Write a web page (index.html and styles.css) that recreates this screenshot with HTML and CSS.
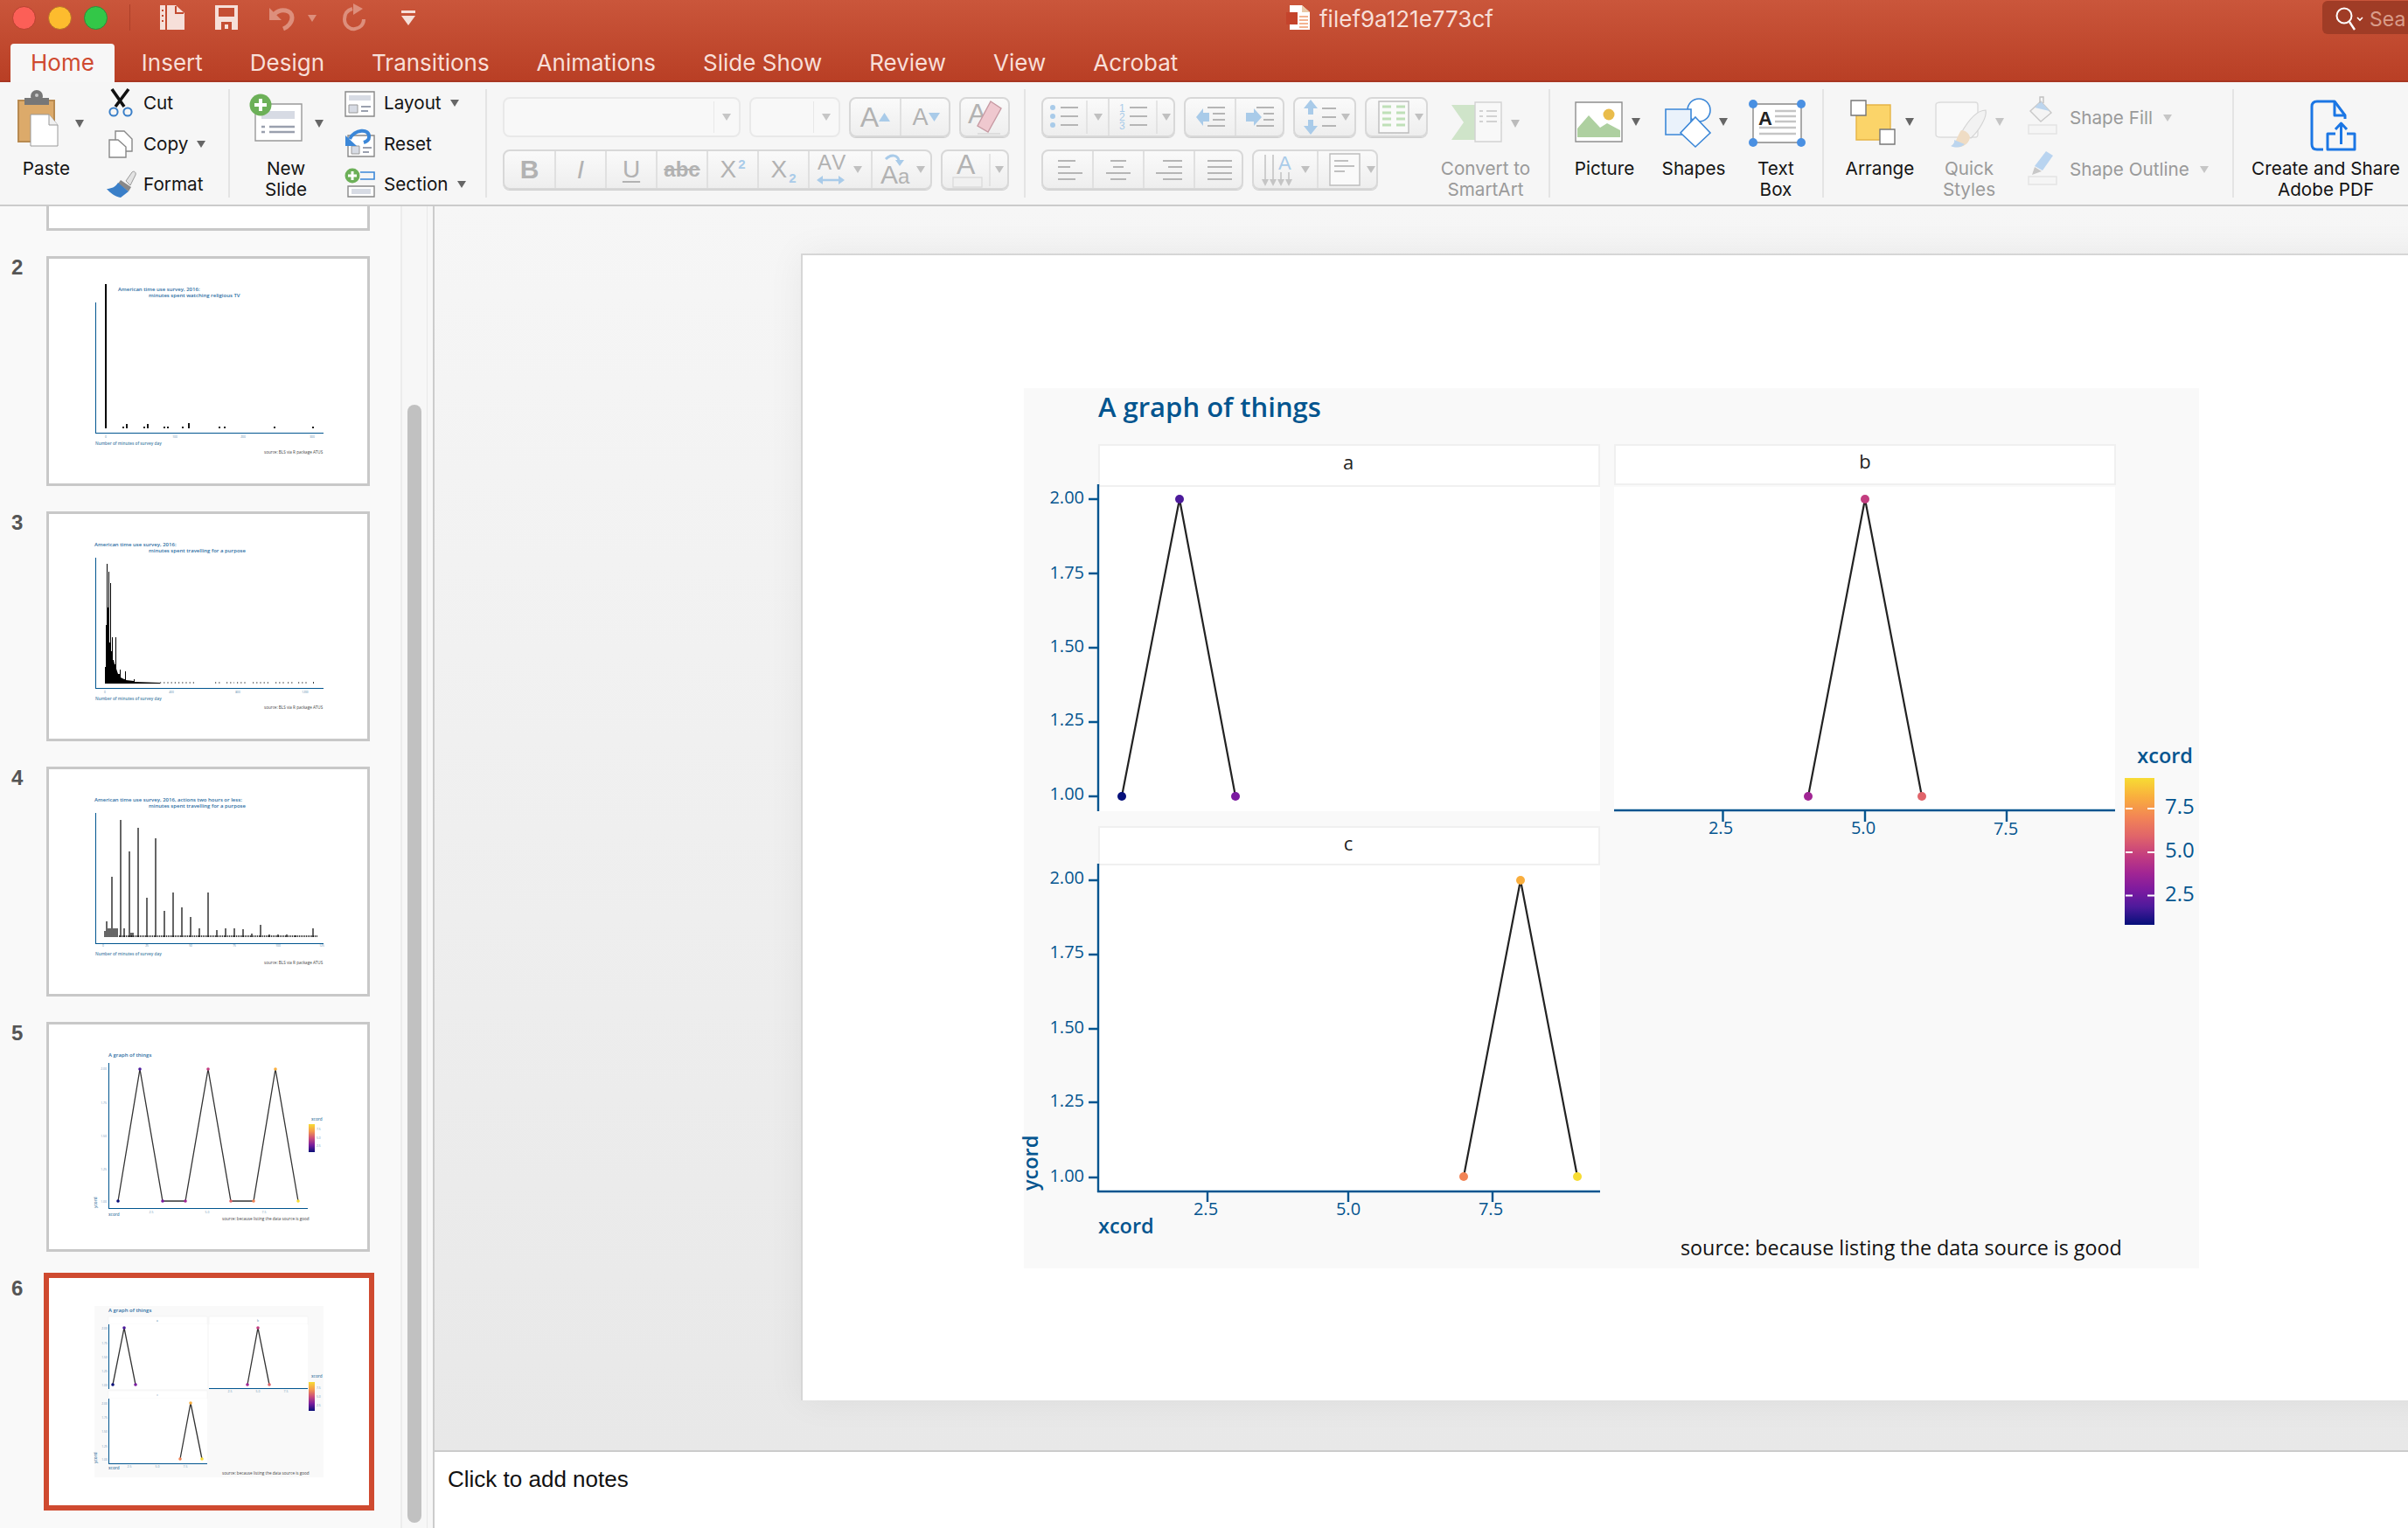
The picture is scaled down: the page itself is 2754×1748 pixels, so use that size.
FILE: index.html
```html
<!DOCTYPE html>
<html lang="en">
<head>
<meta charset="utf-8">
<title>filef9a121e773cf</title>
<link rel="stylesheet" href="styles.css">
</head>
<body>
<div class="app">
  <div class="chrome">
    <header class="titlebar">
      <span class="light red"></span><span class="light yellow"></span><span class="light green"></span>
      <span class="qat-sep"></span>
      <svg class="qat q-doc" width="32" height="28" viewBox="0 0 32 28"><path d="M2 0H20L30 9V28H2Z" fill="#f6dfd9"/><path d="M9 0V28" stroke="#c24a30" stroke-width="2"/><path d="M5 5V7M5 11V13M5 17V19" stroke="#c24a30" stroke-width="2"/><path d="M20 1V9H29" fill="none" stroke="#c24a30" stroke-width="2"/></svg>
      <svg class="qat q-save" width="30" height="28" viewBox="0 0 30 28"><path d="M2 0H28V28H2Z" fill="#f6dfd9"/><path d="M6 3H24V13H6Z" fill="#c54e34"/><path d="M9 19H21V28H9Z" fill="#c54e34"/><path d="M13 22H17V27H13Z" fill="#f6dfd9"/></svg>
      <svg class="qat q-undo" width="60" height="28" viewBox="0 0 60 28"><path d="M3 3V17H17Z" fill="#dd8f7c"/><path d="M9 10C16 3 29 5 29 14C29 20 24 25 19 27" fill="none" stroke="#dd8f7c" stroke-width="5"/><path d="M47 11H57L52 19Z" fill="#dd8f7c"/></svg>
      <svg class="qat q-redo" width="28" height="32" viewBox="0 0 28 32"><path d="M13 0L24 6L13 13Z" fill="#dd8f7c"/><path d="M12 6C5 8 3 13 3 18C3 26 10 30 15 29C21 28 25 24 25 18" fill="none" stroke="#dd8f7c" stroke-width="4"/></svg>
      <svg class="qat q-more" width="18" height="20" viewBox="0 0 18 20"><path d="M1 2H17V5H1Z" fill="#f6dfd9"/><path d="M1 8H17L9 19Z" fill="#f6dfd9"/></svg>
      <svg class="doc-icon" width="28" height="28" viewBox="0 0 28 28"><path d="M4 0H18L27 8V28H4Z" fill="#fff"/><path d="M18 0V8H27Z" fill="#e9c9a8"/><path d="M0 8H13V22H0Z" fill="#c4432b"/><path d="M15 13H25M15 17H25M15 21H25M15 25H25" stroke="#ef9a6d" stroke-width="1.6"/></svg>
      <span class="doc-title">filef9a121e773cf</span>
      <div class="search">
        <svg width="34" height="30" viewBox="0 0 34 30"><circle cx="11" cy="11" r="8.5" fill="none" stroke="#fff" stroke-width="2"/><path d="M17 18L23 27" stroke="#fff" stroke-width="2.4"/><path d="M26 13L29 16L32 13" fill="none" stroke="#fff" stroke-width="1.6"/></svg>
        <span class="search-text">Sea</span>
      </div>
    </header>
    <nav class="tabs">
      <span class="tab active">Home</span>
      <span class="tab">Insert</span>
      <span class="tab">Design</span>
      <span class="tab">Transitions</span>
      <span class="tab">Animations</span>
      <span class="tab">Slide Show</span>
      <span class="tab">Review</span>
      <span class="tab">View</span>
      <span class="tab">Acrobat</span>
    </nav>
  </div>

  <section class="ribbon">
    <div class="group g-clip">
      <div class="big b-paste">
        <svg width="106" height="79" viewBox="0 0 106 79"><path d="M21 13H62V60H21Z" fill="#dcaa6a" stroke="#b88a50" stroke-width="2"/><path d="M28 10H56V18H28Z" fill="#777"/><circle cx="42" cy="8" r="7" fill="#777"/><circle cx="42" cy="7" r="2" fill="#c8c8c8"/><path d="M35 29H56L66 41V65H35Z" fill="#fff" stroke="#999" stroke-width="1"/><path d="M56 29V41H66" fill="#f0f0f0" stroke="#999"/><path d="M86 35H96L91 44Z" fill="#666"/></svg>
        <span class="lbl">Paste</span>
      </div>
      <div class="stack s-clip">
        <div class="row">
          <svg class="ico" width="40" height="32" viewBox="0 0 40 32"><path d="M10 0L24 20M29 0L14 20" stroke="#111" stroke-width="3.6"/><circle cx="12" cy="26" r="4.6" fill="none" stroke="#3a7fc8" stroke-width="2"/><circle cx="28" cy="26" r="4.6" fill="none" stroke="#3a7fc8" stroke-width="2"/></svg>
          <span class="lbl">Cut</span>
        </div>
        <div class="row">
          <svg class="ico" width="40" height="32" viewBox="0 0 40 32"><path d="M14 1H24L33 10V24H14Z" fill="#fff" stroke="#888" stroke-width="1.4"/><path d="M7 11H17L26 19V31H7Z" fill="#fff" stroke="#888" stroke-width="1.4"/></svg>
          <span class="lbl">Copy</span><span class="caret"></span>
        </div>
        <div class="row">
          <svg class="ico" width="40" height="32" viewBox="0 0 40 32"><path d="M26 12L33 2C35 0 38 2 37 5L31 17Z" fill="#e3e3e3" stroke="#999"/><path d="M20 11L32 19L29 24L17 15Z" fill="#888"/><path d="M17 14L29 24L20 31C14 30 8 26 4 21C9 21 14 19 17 14Z" fill="#3a7fc8"/></svg>
          <span class="lbl">Format</span>
        </div>
      </div>
    </div>

    <div class="group g-slides">
      <div class="big b-new">
        <svg width="94" height="79" viewBox="0 0 94 79"><path d="M12 17H65V59H12Z" fill="#fff" stroke="#999" stroke-width="1.4"/><path d="M19 25H57V34H19Z" fill="#d7dbe4"/><path d="M19 43H23M28 43H57M19 49H23M28 49H57" stroke="#9aa0ae" stroke-width="2.4"/><circle cx="18" cy="18" r="12.5" fill="#6cb058"/><path d="M18 11V25M11 18H25" stroke="#fff" stroke-width="4"/><path d="M80 35H90L85 44Z" fill="#666"/></svg>
        <span class="lbl">New<br>Slide</span>
      </div>
      <div class="stack s-slides">
        <div class="row">
          <svg class="ico2" width="44" height="32" viewBox="0 0 44 32"><path d="M6 3H39V31H6Z" fill="#fff" stroke="#888" stroke-width="1.4"/><path d="M10 7H35V13H10Z" fill="#d7dbe4"/><path d="M10 18H20V27H10Z" fill="#d7dbe4" stroke="#999" stroke-width="1"/><path d="M24 20H35M24 25H32" stroke="#9aa0ae" stroke-width="2"/></svg>
          <span class="lbl">Layout</span><span class="caret"></span>
        </div>
        <div class="row">
          <svg class="ico2" width="44" height="32" viewBox="0 0 44 32"><path d="M9 6H39V30H9Z" fill="#fff" stroke="#888" stroke-width="1.4"/><path d="M13 18H22V27H13Z" fill="#d7dbe4" stroke="#999" stroke-width="1"/><path d="M26 20H36M26 25H33" stroke="#9aa0ae" stroke-width="2"/><path d="M6 6V18H19Z" fill="#3b87d8"/><path d="M11 10C16 -1 34 -3 33 8C33 11 30 13 27 14" fill="none" stroke="#3b87d8" stroke-width="4"/></svg>
          <span class="lbl">Reset</span>
        </div>
        <div class="row">
          <svg class="ico2" width="44" height="32" viewBox="0 0 44 32"><path d="M23 2H39V10H23" fill="none" stroke="#3b87d8" stroke-width="1.6"/><path d="M9 18H39V30H9Z" fill="#fff" stroke="#888" stroke-width="1.4"/><path d="M13 21H35V27H13Z" fill="#d7dbe4"/><circle cx="14" cy="6" r="8.5" fill="#6cb058"/><path d="M14 1V11M9 6H19" stroke="#fff" stroke-width="3"/></svg>
          <span class="lbl">Section</span><span class="caret"></span>
        </div>
      </div>
    </div>

    <div class="group g-font">
      <div class="tool-row">
        <div class="field f-name"><span class="field-sep"></span><span class="caret off"></span></div>
        <div class="field f-size"><span class="field-sep"></span><span class="caret off"></span></div>
        <div class="set w116">
          <div class="cell w58"><span class="glyph g30">A</span><svg width="13" height="10" viewBox="0 0 13 10"><path d="M0 10L6.500 0L13 10Z" fill="#a9cbe9"/></svg></div>
          <div class="cell w58"><span class="glyph g26">A</span><svg width="13" height="10" viewBox="0 0 13 10"><path d="M0 0L6.500 10L13 0Z" fill="#a9cbe9"/></svg></div>
        </div>
        <div class="set w58">
          <div class="cell w58 clear-cell"><span class="glyph g30 clear-a">A</span><svg class="eraser" width="34" height="42" viewBox="0 0 34 42"><path d="M19 3L31 11L16 38L4 31Z" fill="#efc8cf" stroke="#c79aa3" stroke-width="1.400"/><path d="M4 40H30" stroke="#ddd" stroke-width="2"/></svg></div>
        </div>
      </div>
      <div class="tool-row">
        <div class="set w491">
          <div class="cell w57"><span class="glyph bold">B</span></div>
          <div class="cell w58"><span class="glyph ital">I</span></div>
          <div class="cell w58"><span class="glyph under">U</span></div>
          <div class="cell w58"><span class="glyph strike">abc</span></div>
          <div class="cell w58"><span class="glyph g28">X</span><span class="sup-blue">2</span></div>
          <div class="cell w58"><span class="glyph g28">X</span><span class="sub-blue">2</span></div>
          <div class="cell w72">
            <svg width="62" height="42" viewBox="0 0 62 42"><text class="av" x="5" y="21">AV</text><path d="M6 33H34" stroke="#a9cbe9" stroke-width="2.500"/><path d="M4 33L11 28V38Z" fill="#a9cbe9"/><path d="M36 33L29 28V38Z" fill="#a9cbe9"/><path d="M46 17H56L51 25Z" fill="#c0c0c0"/></svg>
          </div>
          <div class="cell w72">
            <svg width="64" height="42" viewBox="0 0 64 42"><text class="aa1" x="6" y="37">A</text><text class="aa2" x="26" y="37">a</text><path d="M12 9C18 3 26 4 27 11" fill="none" stroke="#a9cbe9" stroke-width="3"/><path d="M23 10H33L28 17Z" fill="#a9cbe9"/><path d="M47 17H57L52 25Z" fill="#c0c0c0"/></svg>
          </div>
        </div>
        <div class="set w78">
          <div class="cell w78">
            <svg width="74" height="42" viewBox="0 0 74 42"><text class="colora" x="16" y="26">A</text><path d="M12 30H45V41H12Z" fill="#f0f0f0" stroke="#dcdcdc" stroke-width="1.400"/><path d="M54 3V40" stroke="#ddd" stroke-width="1.400"/><path d="M60 17H70L65 25Z" fill="#c0c0c0"/></svg>
          </div>
        </div>
      </div>
    </div>

    <div class="group g-para">
      <div class="para-rows">
        <div class="tool-row">
          <div class="set w153">
            <div class="cell w74"><svg width="70" height="42" viewBox="0 0 70 42"><g fill="#a9cbe9"><circle cx="9" cy="10" r="3"/><circle cx="9" cy="20" r="3"/><circle cx="9" cy="30" r="3"/></g><path d="M18 10H38M18 20H38M18 30H38" stroke="#b5b5b5" stroke-width="2"/><path d="M48 2V40" stroke="#ddd" stroke-width="1.400"/><path d="M56 17H66L61 25Z" fill="#c0c0c0"/></svg></div>
            <div class="cell w79"><svg width="74" height="42" viewBox="0 0 74 42"><text class="num-blue" x="11" y="15">1</text><text class="num-blue" x="11" y="25">2</text><text class="num-blue" x="11" y="35">3</text><path d="M23 10H43M23 20H43M23 30H43" stroke="#b5b5b5" stroke-width="2"/><path d="M54 2V40" stroke="#ddd" stroke-width="1.400"/><path d="M60 17H70L65 25Z" fill="#c0c0c0"/></svg></div>
          </div>
          <div class="set w115">
            <div class="cell w58"><svg width="50" height="42" viewBox="0 0 50 42"><path d="M9 21L17 11V16H24V26H17V31Z" fill="#a9cbe9"/><path d="M22 10H42M28 17H42M28 24H42M22 31H42" stroke="#b5b5b5" stroke-width="2"/></svg></div>
            <div class="cell w57"><svg width="50" height="42" viewBox="0 0 50 42"><path d="M26 21L17 11V16H8V26H17V31Z" fill="#a9cbe9"/><path d="M20 10H40M28 17H40M28 24H40M20 31H40" stroke="#b5b5b5" stroke-width="2"/></svg></div>
          </div>
          <div class="set w72">
            <div class="cell w72"><svg width="66" height="42" viewBox="0 0 66 42"><path d="M15 1L23 11H18V18H12V11H7ZM15 41L23 31H18V24H12V31H7Z" fill="#a9cbe9"/><path d="M28 11H44M28 21H44M28 31H44" stroke="#b5b5b5" stroke-width="2"/><path d="M50 17H60L55 25Z" fill="#c0c0c0"/></svg></div>
          </div>
          <div class="set w72">
            <div class="cell w72"><svg width="66" height="42" viewBox="0 0 66 42"><path d="M11 3H45V39H11Z" fill="#fafafa" stroke="#bdbdbd" stroke-width="1.400"/><path d="M15 9H25M31 9H41M15 16H25M31 16H41M15 23H25M31 23H41M15 30H25M31 30H41" stroke="#bfe0b8" stroke-width="3"/><path d="M52 17H62L57 25Z" fill="#c0c0c0"/></svg></div>
          </div>
        </div>
        <div class="tool-row">
          <div class="set w231">
            <div class="cell w58"><svg width="50" height="42" viewBox="0 0 50 42"><path d="M14 11H34M14 18H28M14 25H42M14 32H34" stroke="#b5b5b5" stroke-width="2.200"/></svg></div>
            <div class="cell w58"><svg width="50" height="42" viewBox="0 0 50 42"><path d="M16 11H34M19 18H31M11 25H39M16 32H34" stroke="#b5b5b5" stroke-width="2.200"/></svg></div>
            <div class="cell w58"><svg width="50" height="42" viewBox="0 0 50 42"><path d="M18 11H40M24 18H40M10 25H40M18 32H40" stroke="#b5b5b5" stroke-width="2.200"/></svg></div>
            <div class="cell w57"><svg width="50" height="42" viewBox="0 0 50 42"><path d="M11 11H39M11 18H39M11 25H39M11 32H39" stroke="#b5b5b5" stroke-width="2.200"/></svg></div>
          </div>
          <div class="set w144">
            <div class="cell w72"><svg width="70" height="42" viewBox="0 0 70 42"><path d="M12 4V32M21 4V32" stroke="#c5c5c5" stroke-width="1.600"/><path d="M8 32H16L12 40ZM17 32H25L21 40ZM26 32H34L30 40ZM35 32H43L39 40Z" fill="#c5c5c5"/><path d="M30 24V32M39 24V32" stroke="#c5c5c5" stroke-width="1.600"/><text class="vert-a" x="27" y="21">A</text><path d="M53 17H63L58 25Z" fill="#c0c0c0"/></svg></div>
            <div class="cell w72"><svg width="70" height="42" viewBox="0 0 70 42"><path d="M13 3H47V39H13Z" fill="#fafafa" stroke="#bdbdbd" stroke-width="1.400"/><path d="M18 11H34M18 17H41M18 23H30" stroke="#c0c0c0" stroke-width="2"/><path d="M55 17H65L60 25Z" fill="#c0c0c0"/></svg></div>
          </div>
        </div>
      </div>
      <div class="big b-smart off">
        <svg width="118" height="79" viewBox="0 0 118 79"><path d="M20 18H64L78 38L64 58H20L34 38Z" fill="#cfe4c9"/><path d="M47 33H77V78H47Z" fill="#f8f8f8" stroke="#d2d2d2" stroke-width="1.400" transform="translate(0 -18)"/><path d="M52 25H56M60 25H72M52 31H56M60 31H72M52 37H56M60 37H72" stroke="#d2d2d2" stroke-width="2"/><path d="M88 35H98L93 44Z" fill="#bbb"/></svg>
        <span class="lbl">Convert to<br>SmartArt</span>
      </div>
    </div>

    <div class="group g-insert">
      <div class="big b-pic">
        <svg width="90" height="79" viewBox="0 0 90 79"><path d="M12 15H65V60H12Z" fill="#fff" stroke="#8e8e8e" stroke-width="1.400"/><path d="M14 55V45L27 30L40 44L48 39L63 47V55Z" fill="#aed0a0"/><circle cx="50" cy="29" r="6.500" fill="#e9bc4b"/><path d="M76 33H86L81 42Z" fill="#666"/></svg>
        <span class="lbl">Picture</span>
      </div>
      <div class="big b-shapes">
        <svg width="114" height="79" viewBox="0 0 114 79"><circle cx="63" cy="24" r="13" fill="#fff" stroke="#3b87d8" stroke-width="1.600"/><path d="M25 23H54V52H25Z" fill="#eaf2fb" stroke="#3b87d8" stroke-width="1.600"/><path d="M59 32L76 50L59 66L42 50Z" fill="#fff" stroke="#3b87d8" stroke-width="1.600"/><path d="M86 33H96L91 42Z" fill="#666"/></svg>
        <span class="lbl">Shapes</span>
      </div>
      <div class="big b-text">
        <svg width="74" height="79" viewBox="0 0 74 79"><path d="M11 17H66V61H11Z" fill="#fff" stroke="#888" stroke-width="1.400"/><text class="tb-a" x="17" y="41">A</text><path d="M36 25H60M36 31H60M36 37H60M18 44H60M18 51H60" stroke="#c5c5c5" stroke-width="2.400"/><g fill="#4a90e2"><circle cx="11" cy="17" r="5"/><circle cx="66" cy="17" r="5"/><circle cx="11" cy="61" r="5"/><circle cx="66" cy="61" r="5"/></g></svg>
        <span class="lbl">Text<br>Box</span>
      </div>
    </div>

    <div class="group g-draw">
      <div class="big b-arr">
        <svg width="100" height="79" viewBox="0 0 100 79"><path d="M23 18H62V58H23Z" fill="#fbd469" stroke="#e6b445" stroke-width="1.400"/><path d="M17 13H34V30H17Z" fill="#fff" stroke="#777" stroke-width="1.400"/><path d="M50 46H67V63H50Z" fill="#fff" stroke="#777" stroke-width="1.400"/><path d="M79 33H89L84 42Z" fill="#666"/></svg>
        <span class="lbl">Arrange</span>
      </div>
      <div class="big b-quick off">
        <svg width="104" height="79" viewBox="0 0 104 79"><path d="M20 15H59C61 15 62 16 62 18V52C62 54 61 55 59 55H20C17 55 14 54 14 52V18C14 16 17 15 20 15Z" fill="#f9f9f9" stroke="#dcdcdc" stroke-width="1.400"/><path d="M43 50C51 36 60 24 71 24C73 32 63 48 54 56Z" fill="#f2f2f2" stroke="#d4d4d4" stroke-width="1.200"/><path d="M43 47C39 52 38 60 32 65C40 68 50 66 53 56C53 51 48 47 43 47Z" fill="#efdcc4"/><path d="M35 58C36 62 32 65 31 65C38 68 44 66 47 63Z" fill="#bcd5ee"/><path d="M82 33H92L87 42Z" fill="#c4c4c4"/></svg>
        <span class="lbl">Quick<br>Styles</span>
      </div>
      <div class="stack s-draw off">
        <div class="row rowh">
          <svg class="ico3" width="40" height="42" viewBox="0 0 40 42"><path d="M6 13L18 2L30 15L18 25Z" fill="#f4f4f4" stroke="#c8c8c8" stroke-width="1.400"/><path d="M11 9L18 2L28 13Z" fill="#bcd5ee"/><path d="M17 4V-3H21V4" fill="none" stroke="#c0c0c0" stroke-width="1.400"/><path d="M4 29H36V39H4Z" fill="#f5f5f5" stroke="#e3e3e3" stroke-width="1.400"/></svg>
          <span class="lbl">Shape Fill</span><span class="caret off"></span>
        </div>
        <div class="row rowh">
          <svg class="ico3" width="40" height="42" viewBox="0 0 40 42"><path d="M24 0L32 5L20 22L11 17Z" fill="#b9d4f0"/><path d="M11 18L19 23L8 27Z" fill="#c8c8c8"/><path d="M4 29H36V38H4Z" fill="#f5f5f5" stroke="#e3e3e3" stroke-width="1.400"/></svg>
          <span class="lbl">Shape Outline</span><span class="caret off"></span>
        </div>
      </div>
    </div>

    <div class="group g-pdf">
      <div class="big b-pdf">
        <svg width="188" height="79" viewBox="0 0 188 79"><g fill="none" stroke="#1b76e4" stroke-width="3" stroke-linejoin="round"><path d="M91 69H84Q78 69 78 63V20Q78 14 84 14H104L116 30V34"/><path d="M104 14V30H116"/><path d="M105 51H96V69H127V51H118"/><path d="M111.500 63V40M105 46L111.500 39L118 46"/></g></svg>
        <span class="lbl nowrap">Create and Share<br>Adobe PDF</span>
      </div>
    </div>
  </section>

  <div class="main">
    <aside class="sidebar">
      <div class="thumb first"></div>

      <div class="slide-row">
        <span class="num">2</span>
        <div class="thumb">
          <svg width="364" height="257" viewBox="3 3 364 257">
            <text class="t-title" x="82" y="40">American time use survey, 2016:</text>
            <text class="t-title" x="117" y="47">minutes spent watching religious TV</text>
            <path class="t-axis" d="M56 53V202H317"/>
            <path class="t-bar" d="M68 32V197" stroke-width="2"/>
            <path class="t-bar" d="M88 195V197M92 192V197M112 195V197M116 192V197M135 195V197M139 195V197M156 195V197M163 191V197M198 195V197M204 195V197M261 195V197M305 195V197" stroke-width="1.800"/>
            <text class="t-tick" x="68" y="208" text-anchor="middle">0</text><text class="t-tick" x="147" y="208" text-anchor="middle">100</text><text class="t-tick" x="225" y="208" text-anchor="middle">200</text><text class="t-tick" x="304" y="208" text-anchor="middle">300</text>
            <text class="t-xlab" x="56" y="216">Number of minutes of survey day</text>
            <text class="t-src" x="249" y="226">source: BLS via R package ATUS</text>
          </svg>
        </div>
      </div>

      <div class="slide-row">
        <span class="num">3</span>
        <div class="thumb">
          <svg width="364" height="257" viewBox="3 3 364 257">
            <text class="t-title" x="55" y="40">American time use survey, 2016:</text>
            <text class="t-title" x="117" y="47">minutes spent travelling for a purpose</text>
            <path class="t-axis" d="M56 53V202H317"/>
            <path d="M67 197V178L68 178V130L69 130V60L70 60V110L71 110V69L72 69V150L73 150V82L74 82V160L75 160V144L76 144V170L77 170V170L78 175L79 175V144L80 144V180L82 186L84 186V181L85 181V190L89 192L90 192V183L91 183V193L100 194V192L101 192V195L130 196V197Z" fill="#000"/>
            <path class="t-bar" d="M130 196H170M193 196H201M206 196H215M218 196H230M236 196H256M262 196H272M276 196H284M288 196H300" stroke-width="1.200" stroke-dasharray="1.200 3"/>
            <path class="t-bar" d="M305 196H306" stroke-width="1.500"/>
            <text class="t-tick" x="67" y="208" text-anchor="middle">0</text><text class="t-tick" x="143" y="208" text-anchor="middle">400</text><text class="t-tick" x="219" y="208" text-anchor="middle">800</text><text class="t-tick" x="296" y="208" text-anchor="middle">1200</text>
            <text class="t-xlab" x="56" y="216">Number of minutes of survey day</text>
            <text class="t-src" x="249" y="226">source: BLS via R package ATUS</text>
          </svg>
        </div>
      </div>

      <div class="slide-row">
        <span class="num">4</span>
        <div class="thumb">
          <svg width="364" height="257" viewBox="3 3 364 257">
            <text class="t-title" x="55" y="40">American time use survey, 2016, actions two hours or less:</text>
            <text class="t-title" x="117" y="47">minutes spent travelling for a purpose</text>
            <path class="t-axis" d="M56 53V202H317"/>
            <path class="t-bar" d="M67 195V188M69 195V177M71 195V185M73 195V185M75 195V126M77 195V185M79 195V185M81 195V185M85 195V61M89 195V185M95 195V97M97 195V190M99 195V190M105 195V70M115 195V150M125 195V82M135 195V165M145 195V144M155 195V161M165 195V172M175 195V185M185 195V144M195 195V187M205 195V185M215 195V185M225 195V186M235 195V191M245 195V181M255 195V192M265 195V192M275 195V192M285 195V193M305 195V185" stroke-width="1.200"/>
            <path class="t-bar" d="M83 194H310" stroke-width="1.500" stroke-dasharray="1.200 .8"/>
            <text class="t-tick" x="65" y="206" text-anchor="middle">0</text><text class="t-tick" x="115" y="206" text-anchor="middle">25</text><text class="t-tick" x="165" y="206" text-anchor="middle">50</text><text class="t-tick" x="215" y="206" text-anchor="middle">75</text><text class="t-tick" x="265" y="206" text-anchor="middle">100</text><text class="t-tick" x="315" y="206" text-anchor="middle">125</text>
            <text class="t-xlab" x="56" y="216">Number of minutes of survey day</text>
            <text class="t-src" x="249" y="226">source: BLS via R package ATUS</text>
          </svg>
        </div>
      </div>

      <div class="slide-row">
        <span class="num">5</span>
        <div class="thumb">
          <svg width="364" height="257" viewBox="3 3 364 257">
            <defs><linearGradient id="plasmaT" x1="0" y1="0" x2="0" y2="1"><stop offset="0" stop-color="#f7dc33"/><stop offset=".25" stop-color="#f59a4c"/><stop offset=".5" stop-color="#cc4d7b"/><stop offset=".75" stop-color="#7a1c9e"/><stop offset="1" stop-color="#0a0f78"/></linearGradient></defs>
            <text class="t-title" x="71" y="40">A graph of things</text>
            <path class="t-axis" d="M71 47V213H299"/>
            <path class="t-line" d="M82 205L107 54L133 205H159L185 54L211 205H237L262 54L288 205"/>
            <g class="t-ticks"><text x="69" y="55" text-anchor="end">2.00</text><text x="69" y="94" text-anchor="end">1.75</text><text x="69" y="132" text-anchor="end">1.50</text><text x="69" y="170" text-anchor="end">1.25</text><text x="69" y="207" text-anchor="end">1.00</text><text x="120" y="219" text-anchor="middle">2.5</text><text x="184" y="219" text-anchor="middle">5.0</text><text x="249" y="219" text-anchor="middle">7.5</text></g>
            <circle cx="82" cy="205" r="1.800" fill="#0a0f78"/><circle cx="107" cy="54" r="1.800" fill="#4c1a9b"/><circle cx="133" cy="205" r="1.800" fill="#7a1aa0"/><circle cx="159" cy="205" r="1.800" fill="#a12594"/><circle cx="185" cy="54" r="1.800" fill="#c33d80"/><circle cx="211" cy="205" r="1.800" fill="#e0646a"/><circle cx="237" cy="205" r="1.800" fill="#f28456"/><circle cx="262" cy="54" r="1.800" fill="#f9ae3e"/><circle cx="288" cy="205" r="1.800" fill="#f7dc33"/>
            <text class="t-ylab" transform="translate(58 213) rotate(-90)">ycord</text>
            <text class="t-xlab" x="71" y="222">xcord</text>
            <text class="t-xlab" x="303" y="113">xcord</text>
            <rect x="300" y="117" width="7" height="32" fill="url(#plasmaT)"/>
            <g class="t-ticks"><text x="309" y="124">7.5</text><text x="309" y="134">5.0</text><text x="309" y="143">2.5</text></g>
            <text class="t-src" x="201" y="227">source: because listing the data source is good</text>
          </svg>
        </div>
      </div>

      <div class="slide-row selected">
        <span class="num">6</span>
        <div class="thumb active">
          <svg width="366" height="260" viewBox="0 0 366 260">
            <rect x="52" y="32" width="262" height="196" fill="#f9f9f9"/>
            <text class="t-title" x="68" y="39">A graph of things</text>
            <rect x="68" y="44" width="113" height="9" fill="#fff" stroke="#f0f0f0" stroke-width=".5"/><rect x="183" y="44" width="113" height="9" fill="#fff" stroke="#f0f0f0" stroke-width=".5"/>
            <rect x="68" y="53" width="113" height="74" fill="#fff"/><rect x="183" y="53" width="113" height="73" fill="#fff"/>
            <rect x="68" y="129" width="113" height="9" fill="#fff" stroke="#f0f0f0" stroke-width=".5"/><rect x="68" y="138" width="113" height="74" fill="#fff"/>
            <path class="t-axis" d="M68 53V127M68 138V212H181M183 126H296"/>
            <path class="t-line" d="M73 122L86 57L99 122M227 122L239 57L252 122M150 207L162 143L175 207"/>
            <g class="t-ticks"><text x="67" y="59" text-anchor="end">2.00</text><text x="67" y="76" text-anchor="end">1.75</text><text x="67" y="92" text-anchor="end">1.50</text><text x="67" y="108" text-anchor="end">1.25</text><text x="67" y="124" text-anchor="end">1.00</text><text x="67" y="145" text-anchor="end">2.00</text><text x="67" y="161" text-anchor="end">1.75</text><text x="67" y="177" text-anchor="end">1.50</text><text x="67" y="194" text-anchor="end">1.25</text><text x="67" y="209" text-anchor="end">1.00</text><text x="92" y="217" text-anchor="middle">2.5</text><text x="124" y="217" text-anchor="middle">5.0</text><text x="156" y="217" text-anchor="middle">7.5</text><text x="207" y="131" text-anchor="middle">2.5</text><text x="239" y="131" text-anchor="middle">5.0</text><text x="271" y="131" text-anchor="middle">7.5</text></g>
            <g class="t-tick"><text x="124" y="50" text-anchor="middle">a</text><text x="239" y="50" text-anchor="middle">b</text><text x="124" y="135" text-anchor="middle">c</text></g>
            <circle cx="73" cy="122" r="1.800" fill="#0a0f78"/><circle cx="86" cy="57" r="1.800" fill="#4c1a9b"/><circle cx="99" cy="122" r="1.800" fill="#7a1aa0"/><circle cx="227" cy="122" r="1.800" fill="#a12594"/><circle cx="239" cy="57" r="1.800" fill="#c33d80"/><circle cx="252" cy="122" r="1.800" fill="#e0646a"/><circle cx="150" cy="207" r="1.800" fill="#f28456"/><circle cx="162" cy="143" r="1.800" fill="#f9ae3e"/><circle cx="175" cy="207" r="1.800" fill="#f7dc33"/>
            <text class="t-ylab" transform="translate(55 212) rotate(-90)">ycord</text>
            <text class="t-xlab" x="68" y="219">xcord</text>
            <text class="t-xlab" x="300" y="114">xcord</text>
            <rect x="297" y="119" width="7" height="33" fill="url(#plasmaT)"/>
            <g class="t-ticks"><text x="306" y="127">7.5</text><text x="306" y="137">5.0</text><text x="306" y="147">2.5</text></g>
            <text class="t-src" x="198" y="225">source: because listing the data source is good</text>
          </svg>
        </div>
      </div>
    </aside>

    <div class="scroll-strip"><span class="scroll-thumb"></span></div>

    <div class="editor">
      <div class="canvas">
        <div class="slide">
          <svg class="plot" width="1344" height="1007" viewBox="1171 444 1344 1007">
            <defs><linearGradient id="plasma" x1="0" y1="0" x2="0" y2="1"><stop offset="0" stop-color="#f7dc33"/><stop offset=".13" stop-color="#f9ae3e"/><stop offset=".27" stop-color="#f28456"/><stop offset=".4" stop-color="#e0646a"/><stop offset=".53" stop-color="#c33d80"/><stop offset=".65" stop-color="#a12594"/><stop offset=".77" stop-color="#7a1aa0"/><stop offset=".88" stop-color="#4c1a9b"/><stop offset="1" stop-color="#06107a"/></linearGradient></defs>
            <rect x="1171" y="444" width="1344" height="1007" fill="#f9f9f9"/>
            <text class="p-title" x="1256" y="477">A graph of things</text>

            <rect class="strip" x="1257" y="509" width="572" height="47"/>
            <rect class="strip" x="1847" y="509" width="572" height="45"/>
            <rect class="strip" x="1257" y="946" width="572" height="43"/>
            <rect class="panel" x="1256" y="557" width="574" height="371"/>
            <rect class="panel" x="1846" y="557" width="573" height="370"/>
            <rect class="panel" x="1256" y="990" width="574" height="373"/>

            <text class="p-strip" x="1542" y="537" text-anchor="middle">a</text>
            <text class="p-strip" x="2133" y="536" text-anchor="middle">b</text>
            <text class="p-strip" x="1542" y="973" text-anchor="middle">c</text>

            <path class="p-axis" d="M1256 554V928M1245 571H1256M1245 656H1256M1245 741H1256M1245 826H1256M1245 911H1256"/>
            <path class="p-axis" d="M1256 988V1364M1245 1007H1256M1245 1092H1256M1245 1177H1256M1245 1261H1256M1245 1347H1256M1255 1363H1830M1381 1363V1375M1542 1363V1375M1707 1363V1375"/>
            <path class="p-axis" d="M1846 927H2419M1970.500 927V940M2133 927V940M2295 927V940"/>

            <g class="p-tick">
              <text x="1240" y="576" text-anchor="end">2.00</text><text x="1240" y="662" text-anchor="end">1.75</text><text x="1240" y="746" text-anchor="end">1.50</text><text x="1240" y="830" text-anchor="end">1.25</text><text x="1240" y="915" text-anchor="end">1.00</text>
              <text x="1240" y="1011" text-anchor="end">2.00</text><text x="1240" y="1096" text-anchor="end">1.75</text><text x="1240" y="1182" text-anchor="end">1.50</text><text x="1240" y="1266" text-anchor="end">1.25</text><text x="1240" y="1352" text-anchor="end">1.00</text>
              <text x="1379" y="1390" text-anchor="middle">2.5</text><text x="1542" y="1390" text-anchor="middle">5.0</text><text x="1705" y="1390" text-anchor="middle">7.5</text>
              <text x="1968" y="954" text-anchor="middle">2.5</text><text x="2131" y="954" text-anchor="middle">5.0</text><text x="2294" y="955" text-anchor="middle">7.5</text>
            </g>

            <path class="p-line" d="M1283 911L1349 571L1413 911"/>
            <path class="p-line" d="M2068 911L2133 571L2198 911"/>
            <path class="p-line" d="M1674 1346L1739 1007L1804 1346"/>
            <circle cx="1283" cy="911" r="5" fill="#06107a"/><circle cx="1349" cy="571" r="5" fill="#4c1a9b"/><circle cx="1413" cy="911" r="5" fill="#7a1aa0"/>
            <circle cx="2068" cy="911" r="5" fill="#a12594"/><circle cx="2133" cy="571" r="5" fill="#c33d80"/><circle cx="2198" cy="911" r="5" fill="#e0646a"/>
            <circle cx="1674" cy="1346" r="5" fill="#f28456"/><circle cx="1739" cy="1007" r="5" fill="#f9ae3e"/><circle cx="1804" cy="1346" r="5" fill="#f7dc33"/>

            <text class="p-lab" x="1256" y="1411">xcord</text>
            <text class="p-lab" transform="translate(1187 1362) rotate(-90)">ycord</text>
            <text class="p-lab" x="2508" y="873" text-anchor="end">xcord</text>

            <rect x="2430" y="890" width="34" height="168" fill="url(#plasma)"/>
            <path d="M2431 925H2439M2456 925H2464M2431 975H2439M2456 975H2464M2431 1024.500H2439M2456 1024.500H2464" stroke="#fff" stroke-width="2"/>
            <g class="p-cbar"><text x="2476" y="931">7.5</text><text x="2476" y="981">5.0</text><text x="2476" y="1031">2.5</text></g>

            <text class="p-src" x="1922" y="1436">source: because listing the data source is good</text>
          </svg>
        </div>
      </div>
      <div class="notes">Click to add notes</div>
    </div>
  </div>
</div>
</body>
</html>
```

FILE: styles.css
```css
* { box-sizing: border-box; }
html, body { margin: 0; padding: 0; height: 100%; }
body { font-family: "Inter", "Liberation Sans", sans-serif; background: #f9f9f9; overflow: hidden; }
svg { display: block; flex: none; overflow: visible; }

.app { width: 2754px; height: 1748px; display: flex; flex-direction: column; overflow: hidden; }

/* window chrome */
.chrome { height: 94px; background: linear-gradient(#ca563b, #b93f25); border-bottom: 2px solid #a83722; display: flex; flex-direction: column; }
.titlebar { height: 44px; display: flex; align-items: flex-start; padding-left: 14px; flex: none; }
.light { width: 27px; height: 27px; border-radius: 50%; margin: 7px 14px 0 0; flex: none; }
.light.red { background: #fc5f57; border: 1.500px solid #b5412f; }
.light.yellow { background: #fdbc2e; border: 1.500px solid #b5702a; }
.light.green { background: #33c748; border: 1.500px solid #2e8c3a; }
.qat-sep { width: 1px; height: 30px; background: #ad4029; margin: 5px 32px 0 11px; flex: none; }
.qat { margin-top: 6px; flex: none; }
.q-doc { margin-right: 31px; }
.q-save { margin-right: 31px; }
.q-undo { margin-right: 26px; }
.q-redo { margin: 4px 39px 0 0; }
.q-more { margin-top: 10px; margin-right: 0; }
.doc-icon { margin: 6px 10px 0 995px; }
.doc-title { font-size: 26px; line-height: 44px; color: #f7ded7; white-space: nowrap; width: 198px; }
.search { margin: 1px 0 0 auto; width: 98px; height: 38px; background: #a03c26; border-radius: 6px 0 0 6px; display: flex; align-items: center; padding: 4px 0 0 14px; }
.search-text { font-size: 23px; color: #d99c8a; margin-left: 6px; white-space: nowrap; }

.tabs { flex: 1; display: flex; padding-left: 12px; }
.tab { font-size: 26px; line-height: 44px; margin-top: 6px; height: 44px; padding: 0 27px; color: #f8dfd8; white-space: nowrap; }
.tab.active { background: #f7f7f7; color: #cf4a30; padding: 0 23px; border-radius: 4px 4px 0 0; margin-right: 4px; }

/* ribbon */
.ribbon { height: 142px; background: #f6f6f6; border-bottom: 2px solid #cbcbcb; padding-top: 8px; display: flex; flex: none; }
.group { height: 124px; border-right: 2px solid #e4e4e4; display: flex; flex: none; }
.g-clip { width: 263px; }
.g-slides { width: 294px; padding-left: 17px; }
.g-font { width: 616px; padding: 9px 0 0 18px; flex-direction: column; gap: 14px; }
.g-para { width: 600px; padding: 9px 0 0 18px; }
.g-insert { width: 313px; padding-left: 17px; }
.g-draw { width: 469px; padding-left: 14px; }
.g-pdf { border-right: 0; padding-left: 11px; }

.lbl { font-size: 20.700px; line-height: 24px; color: #141414; white-space: nowrap; }
.big { display: flex; flex-direction: column; align-items: center; text-align: center; flex: none; }
.big .lbl { display: block; }
.off .lbl { color: #9a9a9a; }
.b-smart { margin-top: -9px; width: 118px; }
.b-paste { width: 106px; }
.b-new { width: 94px; }
.b-pic { width: 90px; }
.b-shapes { width: 114px; }
.b-text { width: 74px; }
.b-arr { width: 100px; }
.b-quick { width: 104px; }
.b-pdf { width: 188px; }

.stack { display: flex; flex-direction: column; flex: none; margin-top: -7px; }
.s-clip { margin-left: 12px; }
.s-slides { margin-left: 15px; }
.s-draw { margin: 3px 0 0 12px; }
.row { height: 46.500px; display: flex; align-items: center; flex: none; }
.row.rowh { height: 59px; }
.ico { margin-right: 6px; }
.ico2 { margin-right: 6px; }
.ico3 { margin-right: 11px; }
.caret { width: 0; height: 0; border-left: 5px solid transparent; border-right: 5px solid transparent; border-top: 8px solid #666; margin-left: 10px; flex: none; }
.caret.off { border-top-color: #c6c6c6; margin-left: 12px; }

.tool-row { display: flex; gap: 10px; height: 46px; flex: none; }
.para-rows { display: flex; flex-direction: column; gap: 14px; width: 449px; flex: none; }
.field { height: 46px; background: #f8f8f8; border: 2px solid #e9e9e9; border-radius: 8px; display: flex; align-items: center; justify-content: flex-end; padding-right: 9px; flex: none; }
.field .caret { margin-left: 9px; }
.field-sep { width: 1px; height: 36px; background: #e8e8e8; }
.f-name { width: 272px; }
.f-size { width: 104px; }
.set { height: 46px; display: flex; border: 2px solid #d8d8d8; border-radius: 8px; background: linear-gradient(#fafafa, #eeeeee); overflow: hidden; flex: none; box-shadow: 0 1px 0 #cfcfcf; }
.cell { height: 42px; display: flex; align-items: center; justify-content: center; flex: none; border-left: 2px solid #e0e0e0; position: relative; }
.cell:first-child { border-left: 0; }
.w57 { width: 57px; } .w58 { width: 58px; } .w72 { width: 72px; } .w74 { width: 74px; } .w78 { width: 74px; } .w79 { width: 75px; }
.set.w116 { width: 116px; } .set.w58 { width: 58px; } .set.w491 { width: 491px; } .set.w78 { width: 78px; }
.set.w153 { width: 153px; } .set.w115 { width: 115px; } .set.w72 { width: 72px; } .set.w231 { width: 231px; } .set.w144 { width: 144px; }
.cell.w58:first-child { width: 56px; }
.glyph { color: #b2b2b2; font-family: "Liberation Sans", sans-serif; line-height: 1; }
.g30 { font-size: 32px; }
.g26 { font-size: 27px; }
.g28 { font-size: 28px; }
.bold { font-weight: 700; font-size: 30px; }
.ital { font-style: italic; font-size: 30px; }
.under { font-size: 28px; text-decoration: underline; text-underline-offset: 4px; }
.strike { font-weight: 700; font-size: 24px; text-decoration: line-through; }
.sup-blue { font-size: 15px; color: #a9cbe9; align-self: flex-start; margin: 6px 0 0 2px; font-family: "Liberation Sans", sans-serif; font-weight: 700; }
.sub-blue { font-size: 15px; color: #a9cbe9; align-self: flex-end; margin: 0 0 3px 2px; font-family: "Liberation Sans", sans-serif; font-weight: 700; }
.clear-cell { justify-content: flex-start; }
.clear-a { margin: -8px 0 0 8px; }
.eraser { margin-left: -14px; }
.av { font: 24px "Liberation Sans", sans-serif; fill: #b2b2b2; letter-spacing: 2px; }
.aa1 { font: 30px "Liberation Sans", sans-serif; fill: #b2b2b2; }
.aa2 { font: 24px "Liberation Sans", sans-serif; fill: #b2b2b2; }
.colora { font: 32px "Liberation Sans", sans-serif; fill: #b2b2b2; }
.num-blue { font: 12px "Liberation Sans", sans-serif; fill: #a9cbe9; }
.vert-a { font: 22px "Liberation Sans", sans-serif; fill: #a9cbe9; }
.tb-a { font: 700 22px "Liberation Sans", sans-serif; fill: #222; }

/* main area */
.main { flex: 1; min-height: 0; display: flex; }
.sidebar { width: 458px; flex: none; background: #f9f9f9; overflow: hidden; }
.slide-row { display: flex; margin-bottom: 29px; }
.slide-row.selected { margin-top: -5px; margin-bottom: 0; }
.num { width: 53px; padding-left: 13px; font: 700 24px/26px "Liberation Sans", sans-serif; color: #555; flex: none; }
.selected .num { width: 50px; padding-top: 5px; }
.thumb { width: 370px; height: 263px; background: #fff; border: 3px solid #c8c8c8; flex: none; overflow: hidden; }
.thumb.first { height: 28px; margin: 0 0 29px 53px; border-top: 0; }
.thumb.active { width: 378px; height: 272px; border: 6px solid #cf4a30; }

.t-title { font: 600 6px "Open Sans", sans-serif; fill: #2c6ea3; }
.t-axis { fill: none; stroke: #00558f; stroke-width: 1; shape-rendering: crispEdges; }
.t-bar { fill: none; stroke: #000; }
.t-tick { font: 3.200px "Open Sans", sans-serif; fill: #4a7fa8; }
.t-ticks { font: 3.400px "Open Sans", sans-serif; fill: #6f97b8; }
.t-xlab { font: 600 4.700px "Open Sans", sans-serif; fill: #4a7fa8; }
.t-ylab { font: 600 4.700px "Open Sans", sans-serif; fill: #4a7fa8; }
.t-src { font: 4.600px "Open Sans", sans-serif; fill: #444; }
.t-line { fill: none; stroke: #333; stroke-width: 1.300; }

.scroll-strip { width: 39px; flex: none; background: linear-gradient(90deg, #f7f7f7 0, #f7f7f7 28px, #e9e9e9 28px, #e9e9e9 29px, #f7f7f7 29px); border-left: 2px solid #ececec; border-right: 2px solid #cccccc; padding: 227px 0 0 6px; }
.scroll-thumb { display: block; width: 16px; height: 1279px; background: #c1c1c1; border-radius: 8px; }

.editor { flex: 1; min-width: 0; display: flex; flex-direction: column; }
.canvas { height: 1425px; flex: none; background: linear-gradient(#f6f6f6, #e8e8e8); padding: 54px 0 0 419px; overflow: hidden; border-bottom: 2px solid #cbcbcb; }
.slide { width: 2000px; height: 1312px; background: #fff; border-top: 2px solid #d6d6d6; border-left: 2px solid #d6d6d6; box-shadow: 0 0 40px rgba(0,0,0,.06); padding: 152px 0 0 253px; }
.notes { flex: 1; background: #fff; font: 26px "Liberation Sans", sans-serif; color: #111; padding: 16px 0 0 15px; line-height: 30px; }

.p-title { font: 600 31px "Open Sans", sans-serif; fill: #04558f; }
.strip { fill: #fff; stroke: #f0f0f0; stroke-width: 2; }
.panel { fill: #fff; }
.p-strip { font: 22px "Open Sans", sans-serif; fill: #222; }
.p-axis { fill: none; stroke: #04558f; stroke-width: 2.400; }
.p-tick { font: 20px "Open Sans", sans-serif; fill: #04558f; }
.p-line { fill: none; stroke: #222; stroke-width: 2.200; }
.p-lab { font: 600 23.500px "Open Sans", sans-serif; fill: #04558f; }
.p-cbar { font: 24px "Open Sans", sans-serif; fill: #04558f; }
.p-src { font: 23.300px "Open Sans", sans-serif; fill: #111; }
.nowrap { white-space: nowrap; }
```
